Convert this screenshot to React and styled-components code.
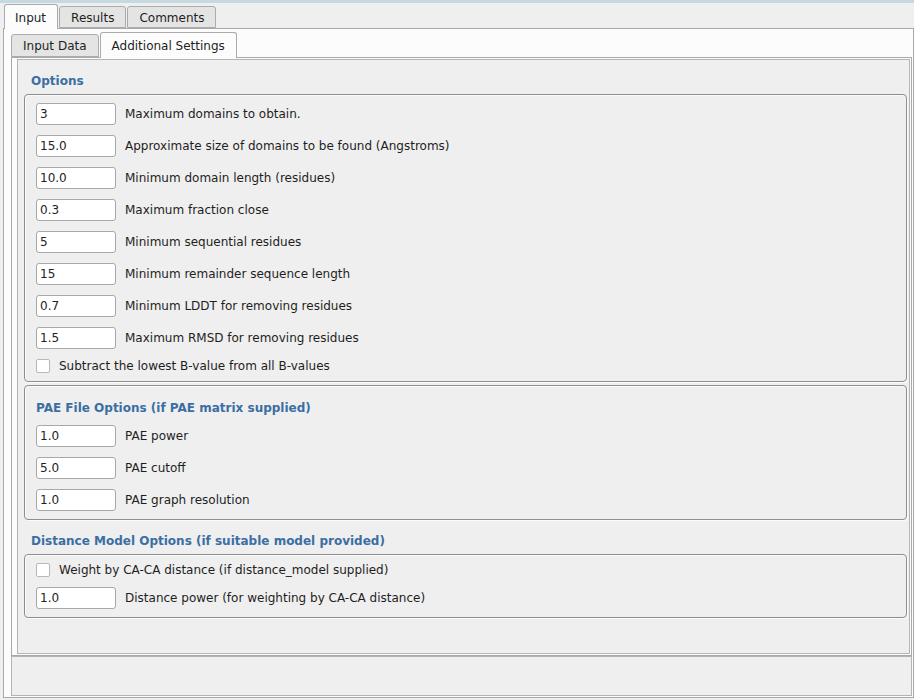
import React from 'react'
import styled, { createGlobalStyle } from 'styled-components'

const GlobalStyle = createGlobalStyle`
    html, body {
        margin: 0;
        padding: 0;
        background: #efefef;
    }
    body {
        font-family: "DejaVu Sans", "Liberation Sans", sans-serif;
        font-size: 12px;
        color: #1e1e1e;
    }
`;

const options = [
    { value: '3', label: 'Maximum domains to obtain.' },
    { value: '15.0', label: 'Approximate size of domains to be found (Angstroms)' },
    { value: '10.0', label: 'Minimum domain length (residues)' },
    { value: '0.3', label: 'Maximum fraction close' },
    { value: '5', label: 'Minimum sequential residues' },
    { value: '15', label: 'Minimum remainder sequence length' },
    { value: '0.7', label: 'Minimum LDDT for removing residues' },
    { value: '1.5', label: 'Maximum RMSD for removing residues' },
];

const paeOptions = [
    { value: '1.0', label: 'PAE power' },
    { value: '5.0', label: 'PAE cutoff' },
    { value: '1.0', label: 'PAE graph resolution' },
];

const InputRow = ({ value, label }) => (
    <Row>
        <TextBox defaultValue={value} />
        <Label>{label}</Label>
    </Row>
);

const CheckRow = ({ label }) => (
    <CheckLine>
        <CheckBox />
        <Label>{label}</Label>
    </CheckLine>
);

const App = () => {
    return (
        <Page>
            <GlobalStyle />
            <TopStrip />
            <TabBar $outer>
                <Tab $active $outer>Input</Tab>
                <Tab $outer>Results</Tab>
                <Tab $outer>Comments</Tab>
            </TabBar>
            <OuterPane>
                <TabBar>
                    <Tab>Input Data</Tab>
                    <Tab $active>Additional Settings</Tab>
                </TabBar>
                <InnerPane>
                    <Frame>
                        <Heading $top={14} $bottom={6}>Options</Heading>
                        <GroupBox>
                            {options.map((o, i) => <InputRow key={i} {...o} />)}
                            <CheckRow label="Subtract the lowest B-value from all B-values" />
                        </GroupBox>
                        <GroupBox $gap>
                            <Heading $top={12} $bottom={5} $inside>PAE File Options (if PAE matrix supplied)</Heading>
                            {paeOptions.map((o, i) => <InputRow key={i} {...o} />)}
                        </GroupBox>
                        <Heading $top={14} $bottom={6}>Distance Model Options (if suitable model provided)</Heading>
                        <GroupBox>
                            <CheckRow label="Weight by CA-CA distance (if distance_model supplied)" />
                            <InputRow value="1.0" label="Distance power (for weighting by CA-CA distance)" />
                        </GroupBox>
                    </Frame>
                </InnerPane>
                <BottomPanel />
            </OuterPane>
        </Page>
    )
}

export default App

const Page = styled.div`
    width: 914px;
    height: 700px;
    display: flex;
    flex-direction: column;
    overflow: hidden;
`;

const TopStrip = styled.div`
    height: 3px;
    background: #c5d9e1;
`;

const TabBar = styled.div`
    display: flex;
    align-items: flex-end;
    height: 25px;
    padding-left: ${p => p.$outer ? '4px' : '0'};
    position: relative;
    z-index: 1;
`;

const Tab = styled.div`
    box-sizing: border-box;
    height: ${p => (p.$active ? 25 : 22) + (p.$outer ? 0 : 1)}px;
    padding: ${p => p.$outer ? '2px' : '0'} 11px 0 ${p => p.$outer && p.$active ? '10px' : '11px'};
    margin-bottom: ${p => p.$active ? '-1px' : '0'};
    display: flex;
    align-items: center;
    border: 1px solid #ababab;
    border-bottom: ${p => p.$active ? 'none' : '1px solid #ababab'};
    border-radius: 3px 3px 0 0;
    background: ${p => p.$active ? '#fcfcfc' : '#e4e4e4'};
    color: #1e1e1e;
    white-space: nowrap;
    & + & {
        margin-left: ${p => p.$active ? '1px' : '-1px'};
    }
`;

const OuterPane = styled.div`
    flex: 1;
    display: flex;
    flex-direction: column;
    margin: 0 0 2px 3px;
    padding: 3px 1px 1px 7px;
    border: 1px solid #a9a9a9;
    background: #fcfcfc;
`;

const InnerPane = styled.div`
    flex: 1;
    display: flex;
    flex-direction: column;
    padding: 1px 1px 1px 5px;
    border: 1px solid #a9a9a9;
    background: #fcfcfc;
`;

const Frame = styled.div`
    flex: 1;
    display: flex;
    flex-direction: column;
    padding: 0 2px 0 6px;
    border: 1px solid #b4b4b4;
    background: #efefef;
`;

const Heading = styled.div`
    padding: ${p => p.$top}px 0 0 ${p => p.$inside ? '0' : '7px'};
    margin-bottom: ${p => p.$bottom}px;
    line-height: 14px;
    font-weight: bold;
    color: #3b6ea3;
`;

const GroupBox = styled.div`
    display: flex;
    flex-direction: column;
    margin-top: ${p => p.$gap ? '3px' : '0'};
    padding: 3px 11px 3px 11px;
    border: 1px solid #8e8e8e;
    border-radius: 4px;
    box-shadow: 1px 1px 0 #fbfbfb, inset 1px 1px 0 #fbfbfb;
`;

const Row = styled.div`
    height: 32px;
    display: flex;
    align-items: center;
    gap: 9px;
`;

const TextBox = styled.input`
    box-sizing: border-box;
    width: 80px;
    height: 22px;
    padding: 0 3px;
    border: 1px solid #a8a8a8;
    border-radius: 3px;
    background: #ffffff;
    font-family: "DejaVu Sans", sans-serif;
    font-size: 12px;
    color: #1e1e1e;
    outline: none;
`;

const CheckLine = styled.div`
    height: 24px;
    display: flex;
    align-items: center;
    gap: 9px;
`;

const CheckBox = styled.span`
    box-sizing: border-box;
    width: 14px;
    height: 14px;
    border: 1px solid #b8b8b8;
    border-radius: 2px;
    background: #ffffff;
`;

const Label = styled.span`
    white-space: nowrap;
`;

const BottomPanel = styled.div`
    height: 38px;
    border: 1px solid #b4b4b4;
    background: #efefef;
`;
